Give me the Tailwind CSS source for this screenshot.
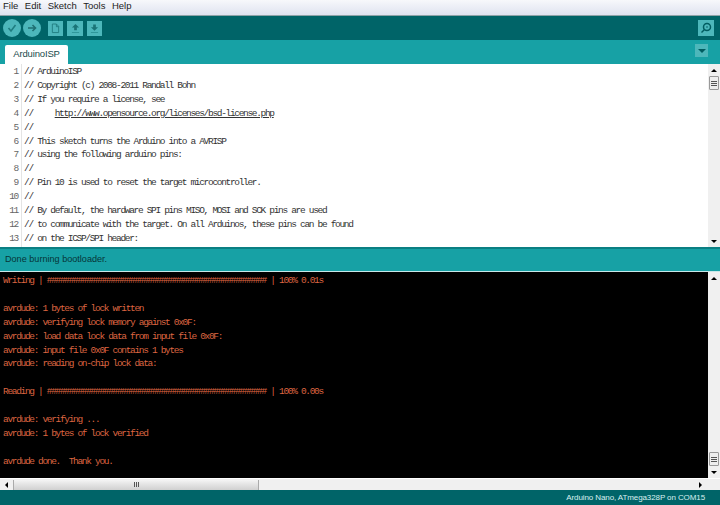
<!DOCTYPE html>
<html lang="en">
<head>
    <meta charset="UTF-8">
    <title>ArduinoISP</title>
    <script src="https://cdn.jsdelivr.net/npm/@tailwindcss/browser@4"></script>
</head>
<body class="w-[720px] h-[505px] overflow-hidden bg-white font-['Liberation_Sans',sans-serif]">
    <div class="flex flex-col h-[505px]">

        <!-- menu bar -->
        <div class="h-[16px] flex items-center gap-[6.5px] pl-[3px] pb-[2px] text-[9.5px] text-[#222] bg-gradient-to-b from-[#f7f8fb] to-[#dfe3f0] border-b border-[#8fa3a8]">
            <span>File</span><span>Edit</span><span>Sketch</span><span>Tools</span><span>Help</span>
        </div>

        <!-- toolbar -->
        <div class="h-[24px] bg-[#006468] flex items-center pl-[3px] pr-[6px]">
            <div class="w-[18px] h-[18px] rounded-full bg-[#4db7bb] flex items-center justify-center">
                <svg class="w-[10px] h-[10px]" viewBox="0 0 10 10" fill="none" stroke="#1f7d80" stroke-width="1.6"><path d="M1.500 5l2.500 3 4.500-6"/></svg>
            </div>
            <div class="w-[18px] h-[18px] rounded-full bg-[#4db7bb] flex items-center justify-center ml-[2px]">
                <svg class="w-[10px] h-[10px]" viewBox="0 0 10 10" fill="none" stroke="#1f6f72" stroke-width="1.600"><path d="M1 5h7M5.500 2l3 3-3 3"/></svg>
            </div>
            <div class="w-[15px] h-[15px] bg-[#4db7bb] flex items-center justify-center ml-[7px]">
                <svg class="w-[9px] h-[11px]" viewBox="0 0 10 12" fill="none" stroke="#1f7d80"><path d="M1.500 1h4.500l2.500 2.500v7h-7zM6 1v3h2.500"/></svg>
            </div>
            <div class="w-[16px] h-[15px] bg-[#4db7bb] flex items-center justify-center ml-[4px]">
                <svg class="w-[9px] h-[11px]" viewBox="0 0 10 12" fill="#1a7477"><path d="M5 1l4 4H6.500v3h-3V5H1z"/><path d="M1 10h8v1H1z" fill="#2c9497"/></svg>
            </div>
            <div class="w-[15px] h-[15px] bg-[#4db7bb] flex items-center justify-center ml-[4px]">
                <svg class="w-[9px] h-[11px]" viewBox="0 0 10 12" fill="#1a7477"><path d="M5 8.500l4-4H6.500v-3h-3v3H1z"/><path d="M1 10h8v1H1z" fill="#2c9497"/></svg>
            </div>
            <div class="w-[16px] h-[16px] bg-[#4db7bb] flex items-center justify-center ml-auto">
                <svg class="w-[12px] h-[12px]" viewBox="0 0 12 12" fill="none" stroke="#005c60" stroke-width="1.500"><circle cx="7" cy="5" r="3.500"/><path d="M4.500 7.500L1.500 10.500"/><circle cx="7" cy="5" r=".8" fill="#005c60" stroke="none"/></svg>
            </div>
        </div>

        <!-- tabs -->
        <div class="h-[24px] bg-[#17a1a5] flex items-end pl-[5px] pr-[13px] relative">
            <div class="w-[63px] h-[19px] bg-white rounded-t-[2px] flex items-center justify-center text-[9.5px] tracking-[-0.15px] text-[#1a4a4c]">ArduinoISP</div>
            <div class="absolute right-[12px] top-[4px] w-[13px] h-[13px] bg-[#4db7bb] flex items-center justify-center">
                <div class="w-0 h-0 border-x-[4px] border-x-transparent border-t-[4px] border-t-[#005c60]"></div>
            </div>
        </div>

        <!-- editor -->
        <div class="h-[183px] flex bg-white font-['Liberation_Mono',monospace] text-[9.5px] leading-[13.9px] tracking-[-1.32px] text-[#333] overflow-hidden">
            <div class="w-[22px] pt-[1px] pr-[3px] text-right text-[#666] border-r border-[#e4e4e4] shrink-0">
                <div>1</div><div>2</div><div>3</div><div>4</div><div>5</div><div>6</div><div>7</div><div>8</div><div>9</div><div>10</div><div>11</div><div>12</div><div>13</div>
            </div>
            <div class="flex-1 flex flex-col pt-[1px] pl-[2px] whitespace-pre">
                <div>// ArduinoISP</div>
                <div>// Copyright (c) 2008-2011 Randall Bohn</div>
                <div>// If you require a license, see</div>
                <div>//     <span class="underline">http://www.opensource.org/licenses/bsd-license.php</span></div>
                <div>//</div>
                <div>// This sketch turns the Arduino into a AVRISP</div>
                <div>// using the following arduino pins:</div>
                <div>//</div>
                <div>// Pin 10 is used to reset the target microcontroller.</div>
                <div>//</div>
                <div>// By default, the hardware SPI pins MISO, MOSI and SCK pins are used</div>
                <div>// to communicate with the target. On all Arduinos, these pins can be found</div>
                <div>// on the ICSP/SPI header:</div>
            </div>
            <!-- editor scrollbar -->
            <div class="w-[12px] bg-[#f0f0f0] flex flex-col items-center shrink-0">
                <div class="h-[12px] flex items-center justify-center"><div class="w-0 h-0 border-x-[3px] border-x-transparent border-b-[3px] border-b-black"></div></div>
                <div class="w-[10px] h-[14px] bg-[#eeeeee] border border-[#999] rounded-[1px] flex flex-col items-center justify-center gap-[1px]">
                    <div class="w-[6px] h-px bg-[#555]"></div><div class="w-[6px] h-px bg-[#555]"></div><div class="w-[6px] h-px bg-[#555]"></div>
                </div>
                <div class="mt-auto h-[12px] flex items-center justify-center"><div class="w-0 h-0 border-x-[3px] border-x-transparent border-t-[3px] border-t-black"></div></div>
            </div>
        </div>

        <!-- status -->
        <div class="h-[25px] bg-[#17a1a5] border-t-2 border-[#0b7f83] border-b border-b-[#c8e8e8] flex items-center pl-[5px] text-[9.1px] text-[#063538]">Done burning bootloader.</div>

        <!-- console -->
        <div class="h-[206px] flex bg-black overflow-hidden">
            <div class="flex-1 flex flex-col pl-[3px] pt-[2px] whitespace-pre font-['Liberation_Mono',monospace] text-[9.5px] leading-[13.9px] tracking-[-1.32px] text-[#dc6540]">
                <div>Writing | ################################################## | 100% 0.01s</div>
                <div>&nbsp;</div>
                <div>avrdude: 1 bytes of lock written</div>
                <div>avrdude: verifying lock memory against 0x0F:</div>
                <div>avrdude: load data lock data from input file 0x0F:</div>
                <div>avrdude: input file 0x0F contains 1 bytes</div>
                <div>avrdude: reading on-chip lock data:</div>
                <div>&nbsp;</div>
                <div>Reading | ################################################## | 100% 0.00s</div>
                <div>&nbsp;</div>
                <div>avrdude: verifying ...</div>
                <div>avrdude: 1 bytes of lock verified</div>
                <div>&nbsp;</div>
                <div>avrdude done.  Thank you.</div>
            </div>
            <div class="w-[12px] bg-[#f0f0f0] flex flex-col items-center shrink-0">
                <div class="h-[12px] flex items-center justify-center"><div class="w-0 h-0 border-x-[3px] border-x-transparent border-b-[3px] border-b-black"></div></div>
                <div class="mt-auto w-[10px] h-[14px] bg-[#eeeeee] border border-[#999] rounded-[1px] flex flex-col items-center justify-center gap-[1px]">
                    <div class="w-[6px] h-px bg-[#555]"></div><div class="w-[6px] h-px bg-[#555]"></div><div class="w-[6px] h-px bg-[#555]"></div>
                </div>
                <div class="h-[12px] flex items-center justify-center"><div class="w-0 h-0 border-x-[3px] border-x-transparent border-t-[3px] border-t-black"></div></div>
            </div>
        </div>

        <!-- console horizontal scrollbar -->
        <div class="h-[12px] bg-[#f0f0f0] border-t border-white flex items-center">
            <div class="w-[13px] flex justify-center"><div class="w-0 h-0 border-y-[3px] border-y-transparent border-r-[3px] border-r-black"></div></div>
            <div class="w-[246px] h-[10px] bg-gradient-to-b from-[#f4f4f4] to-[#d0d0d0] border-x border-[#aaa] flex items-center justify-center gap-[1px]">
                <div class="w-px h-[5px] bg-[#555]"></div><div class="w-px h-[5px] bg-[#555]"></div><div class="w-px h-[5px] bg-[#555]"></div>
            </div>
            <div class="ml-auto w-[12px] mr-[14px] flex justify-center"><div class="w-0 h-0 border-y-[3px] border-y-transparent border-l-[3px] border-l-black"></div></div>
        </div>

        <!-- footer -->
        <div class="flex-1 bg-[#006468] flex items-center justify-end pr-[15px] text-[8px] tracking-[-0.1px] text-[#d8efef]">Arduino Nano, ATmega328P on COM15</div>
    </div>
</body>
</html>
